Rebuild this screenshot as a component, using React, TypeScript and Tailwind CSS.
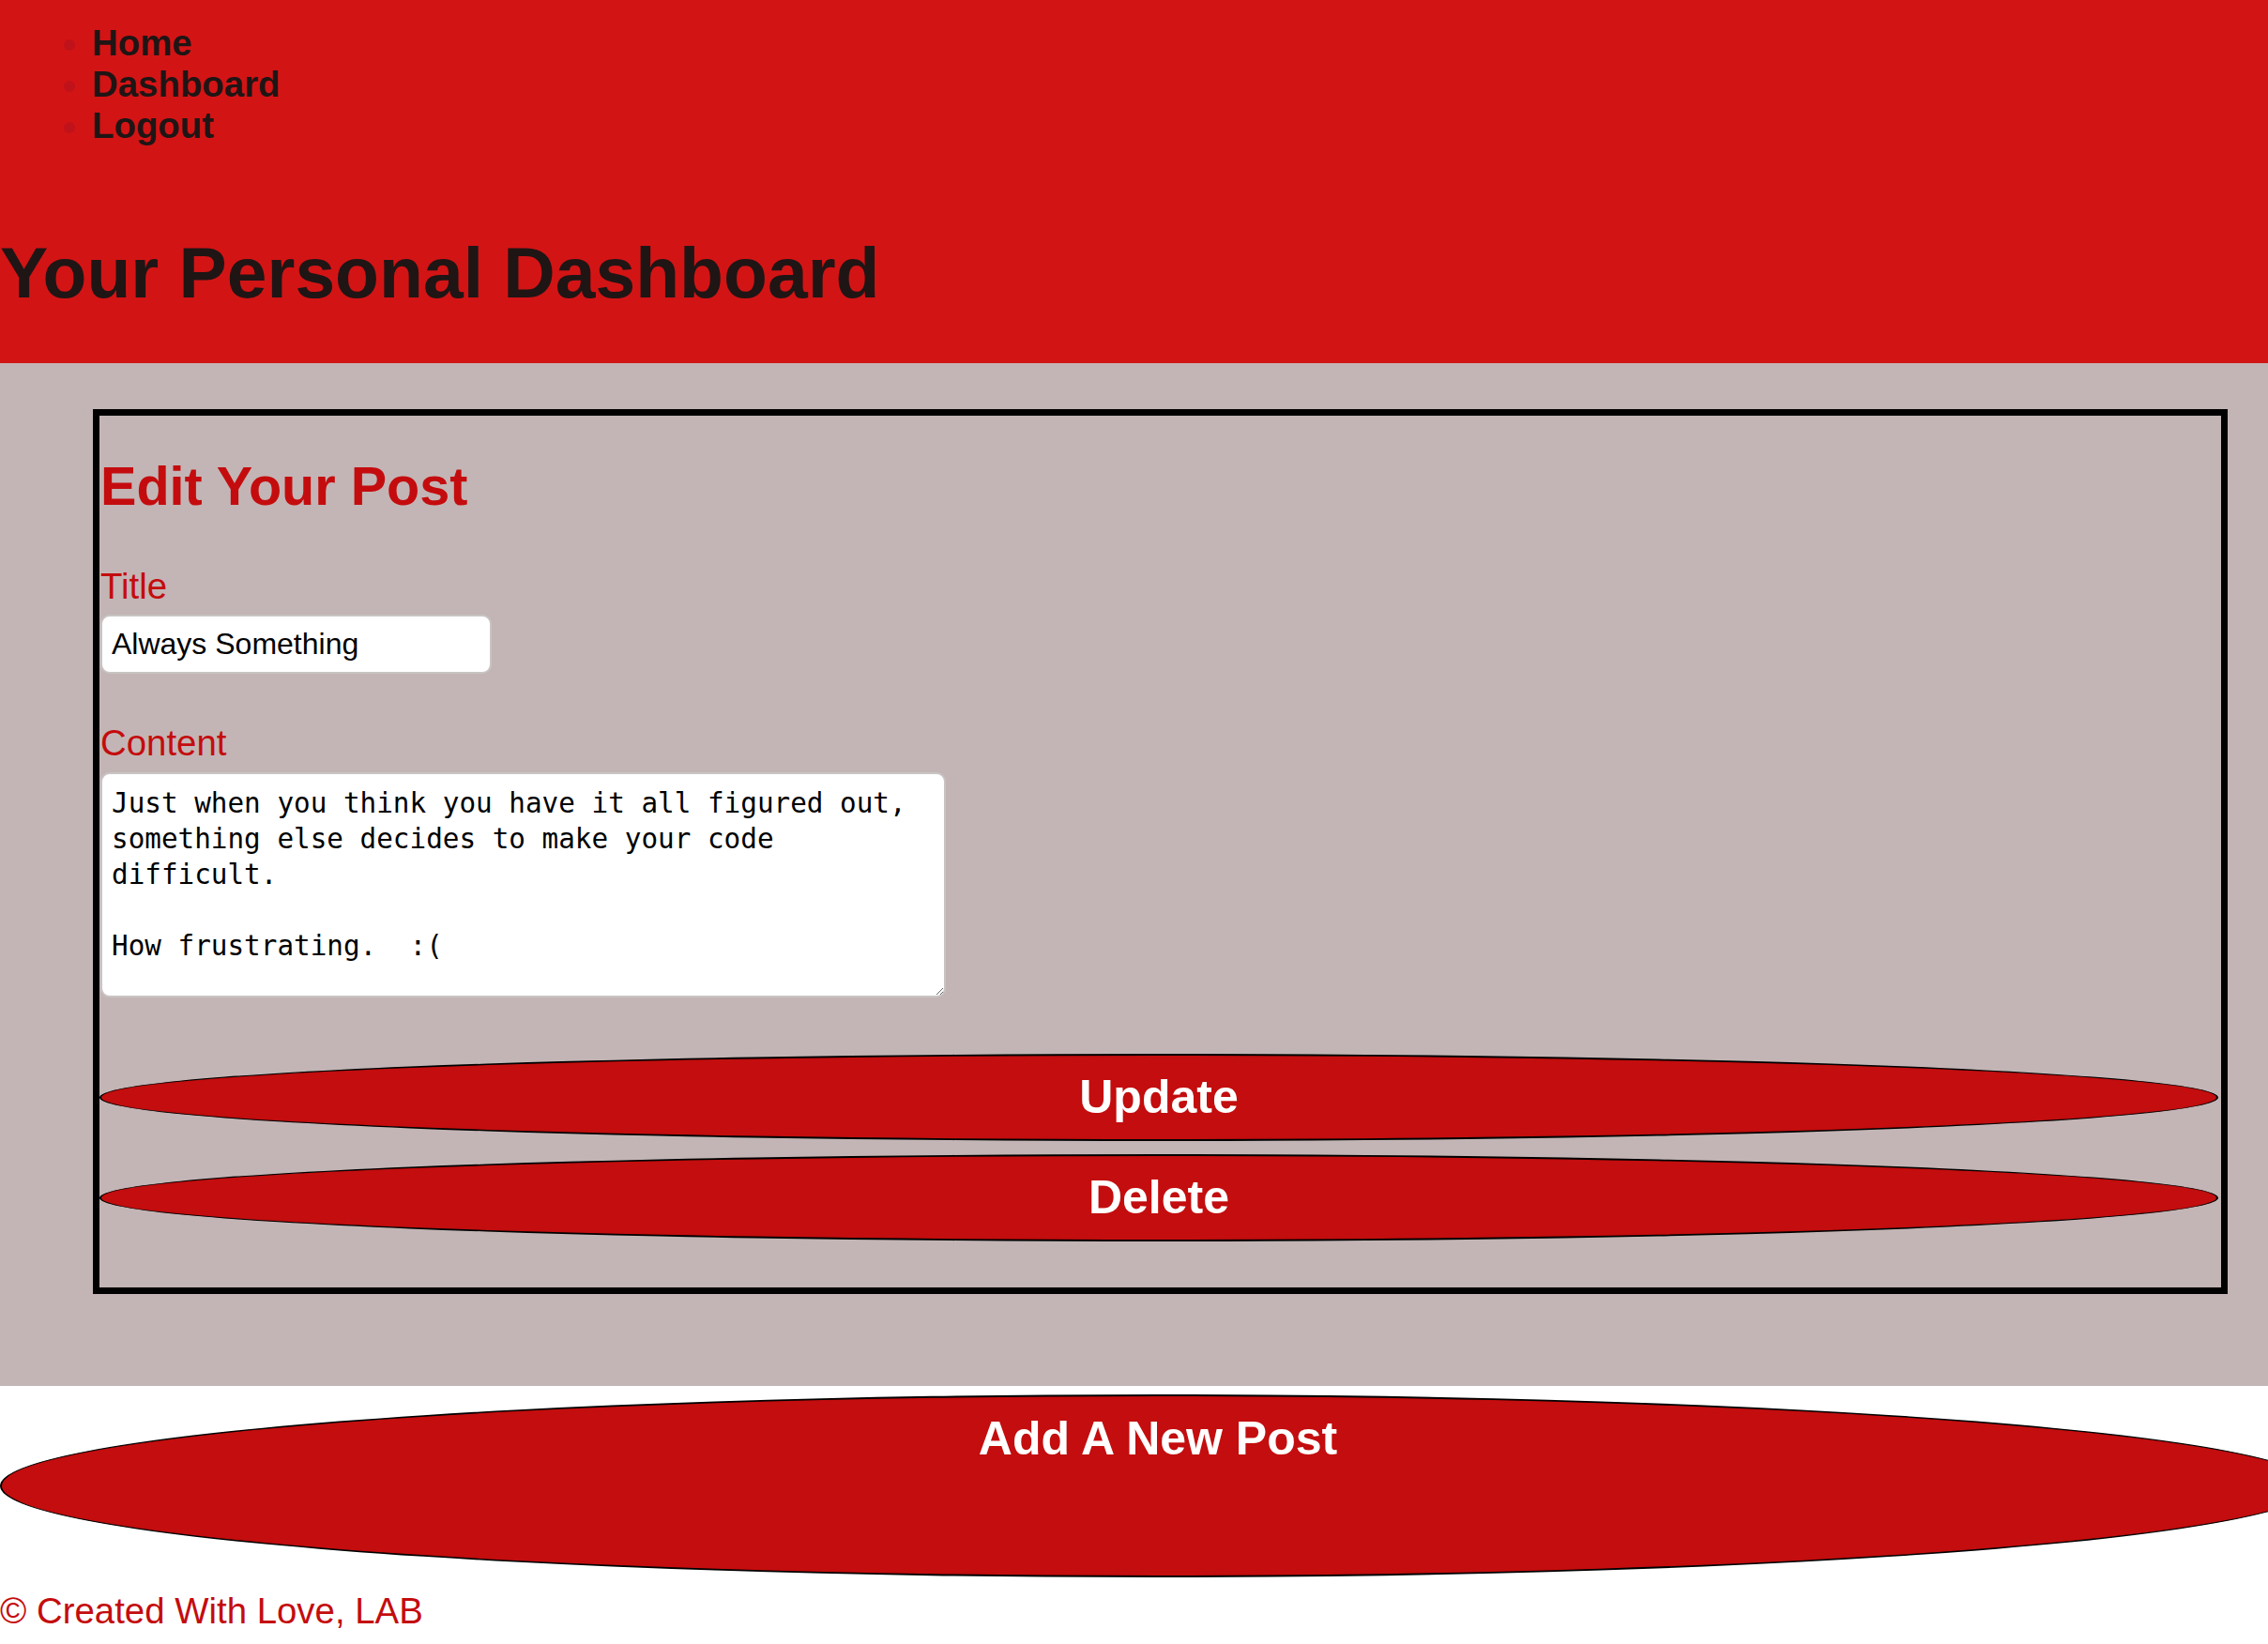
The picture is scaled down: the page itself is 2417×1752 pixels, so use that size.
import { useState } from 'react';

export default function App() {
    const [title, setTitle] = useState('Always Something');
    const [content, setContent] = useState(
        'Just when you think you have it all figured out, something else decides to make your code difficult.\n\nHow frustrating.  :('
    );

    return (
        <div className="min-h-screen w-full overflow-x-hidden bg-white font-['Liberation_Sans',Arial,sans-serif]">
            {/* Header */}
            <header className="h-[387px] bg-[#d31415] pt-[24px]">
                <ul className="list-disc pl-[98px] text-[38.4px] leading-[44px] font-bold text-[#1f1515] marker:text-[#c0121a]">
                    <li><a href="#">Home</a></li>
                    <li><a href="#">Dashboard</a></li>
                    <li><a href="#">Logout</a></li>
                </ul>
                <h1 className="mt-[90px] text-[76.8px] leading-[88px] font-bold text-[#1f1515]">Your Personal Dashboard</h1>
            </header>

            {/* Edit card */}
            <main className="bg-[#c3b5b5] pt-[49px] pb-[98px] pl-[99px] pr-[43px]">
                <div className="border-[7px] border-black pl-[1px] pt-[42px] pb-[49px]">
                    <h2 className="text-[57.6px] leading-[66px] font-bold text-[#c40c0e]">Edit Your Post</h2>
                    <form className="flex flex-col" onSubmit={(e) => e.preventDefault()}>
                        <label className="mt-[52px] text-[38.4px] leading-[44px] text-[#c40c0e]">Title</label>
                        <input
                            type="text"
                            value={title}
                            onChange={(e) => setTitle(e.target.value)}
                            className="mt-[8px] h-[63px] w-[417px] rounded-[10px] border-2 border-[#c9c4c4] bg-white px-[10px] text-[32px] text-black outline-none"
                        />

                        <label className="mt-[52px] text-[38.4px] leading-[44px] text-[#c40c0e]">Content</label>
                        <textarea
                            value={content}
                            onChange={(e) => setContent(e.target.value)}
                            className="mt-[9px] h-[240px] w-[901px] rounded-[10px] border-2 border-[#c9c4c4] bg-white px-[10px] pt-[12px] font-['DejaVu_Sans_Mono',monospace] text-[29.3px] leading-[38px] text-black outline-none"
                        />

                        <button
                            type="submit"
                            className="-ml-[1px] mt-[60px] mr-[3px] h-[93px] rounded-[50%] border-[2.4px] border-black bg-[#c30d0e] text-[50px] font-bold text-white"
                        >
                            Update
                        </button>
                        <button
                            type="button"
                            className="-ml-[1px] mt-[14px] mr-[3px] h-[93px] rounded-[50%] border-[2.4px] border-black bg-[#c30d0e] text-[50px] font-bold text-white"
                        >
                            Delete
                        </button>
                    </form>
                </div>
            </main>

            {/* Footer */}
            <div className="overflow-hidden pt-[9px]">
                <button
                    type="button"
                    className="flex h-[195px] w-[2468px] items-start justify-center rounded-[50%] border-[2.4px] border-black bg-[#c30d0e] pt-[17px] text-[50px] leading-[57px] font-bold text-white"
                >
                    Add A New Post
                </button>
            </div>
            <footer className="mt-[14px] text-[38.4px] leading-[44px] text-[#c40c0e]">© Created With Love, LAB</footer>
        </div>
    );
}
